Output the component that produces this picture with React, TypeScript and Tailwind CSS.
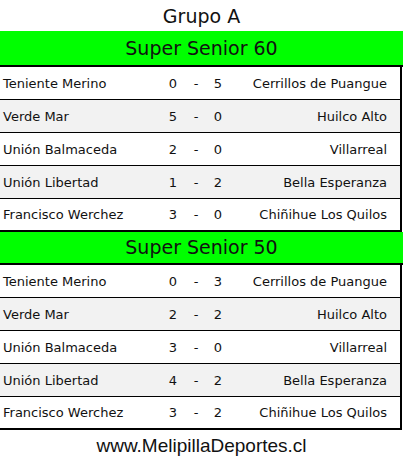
const groups = [
  {
    name: 'Super Senior 60',
    matches: [
      ['Teniente Merino', '0', '5', 'Cerrillos de Puangue'],
      ['Verde Mar', '5', '0', 'Huilco Alto'],
      ['Unión Balmaceda', '2', '0', 'Villarreal'],
      ['Unión Libertad', '1', '2', 'Bella Esperanza'],
      ['Francisco Werchez', '3', '0', 'Chiñihue Los Quilos'],
    ],
  },
  {
    name: 'Super Senior 50',
    matches: [
      ['Teniente Merino', '0', '3', 'Cerrillos de Puangue'],
      ['Verde Mar', '2', '2', 'Huilco Alto'],
      ['Unión Balmaceda', '3', '0', 'Villarreal'],
      ['Unión Libertad', '4', '2', 'Bella Esperanza'],
      ['Francisco Werchez', '3', '2', 'Chiñihue Los Quilos'],
    ],
  },
];

function MatchRow({ m, i, last }: { m: string[]; i: number; last: boolean }) {
  return (
    <div
      className={`grid grid-cols-[164px_18px_28px_16px_1fr] items-center h-[33px] pt-[1px] border-black ${
        last ? 'border-b-2' : 'border-b'
      } ${i % 2 === 1 ? 'bg-[#f2f2f2]' : 'bg-white'}`}
    >
      <span className="pl-[3px] whitespace-nowrap">{m[0]}</span>
      <span className="text-center">{m[1]}</span>
      <span className="text-center">-</span>
      <span className="text-center">{m[2]}</span>
      <span className="text-right pr-[13px] whitespace-nowrap">{m[3]}</span>
    </div>
  );
}

export default function App() {
  return (
    <div className="w-[403px] h-[464px] bg-white text-[#111] font-['DejaVu_Sans',Verdana,sans-serif]">
      <div className="h-[31px] flex items-center justify-center text-[19px] pt-[1px]">Grupo A</div>
      {groups.map((g, gi) => (
        <div key={g.name}>
          <div
            className={`bg-[#00ff00] flex items-center justify-center text-[19px] border-b-2 border-black ${
              gi === 0 ? 'h-[36px]' : 'h-[33px]'
            }`}
          >
            {g.name}
          </div>
          <div className="w-[402px] border-r-2 border-black text-[13px]">
            {g.matches.map((m, i) => (
              <MatchRow key={i} m={m} i={i} last={i === g.matches.length - 1} />
            ))}
          </div>
        </div>
      ))}
      <div className="h-[33px] flex items-center justify-center text-[19px] font-['Liberation_Sans',Arial,sans-serif]">
        www.MelipillaDeportes.cl
      </div>
    </div>
  );
}
